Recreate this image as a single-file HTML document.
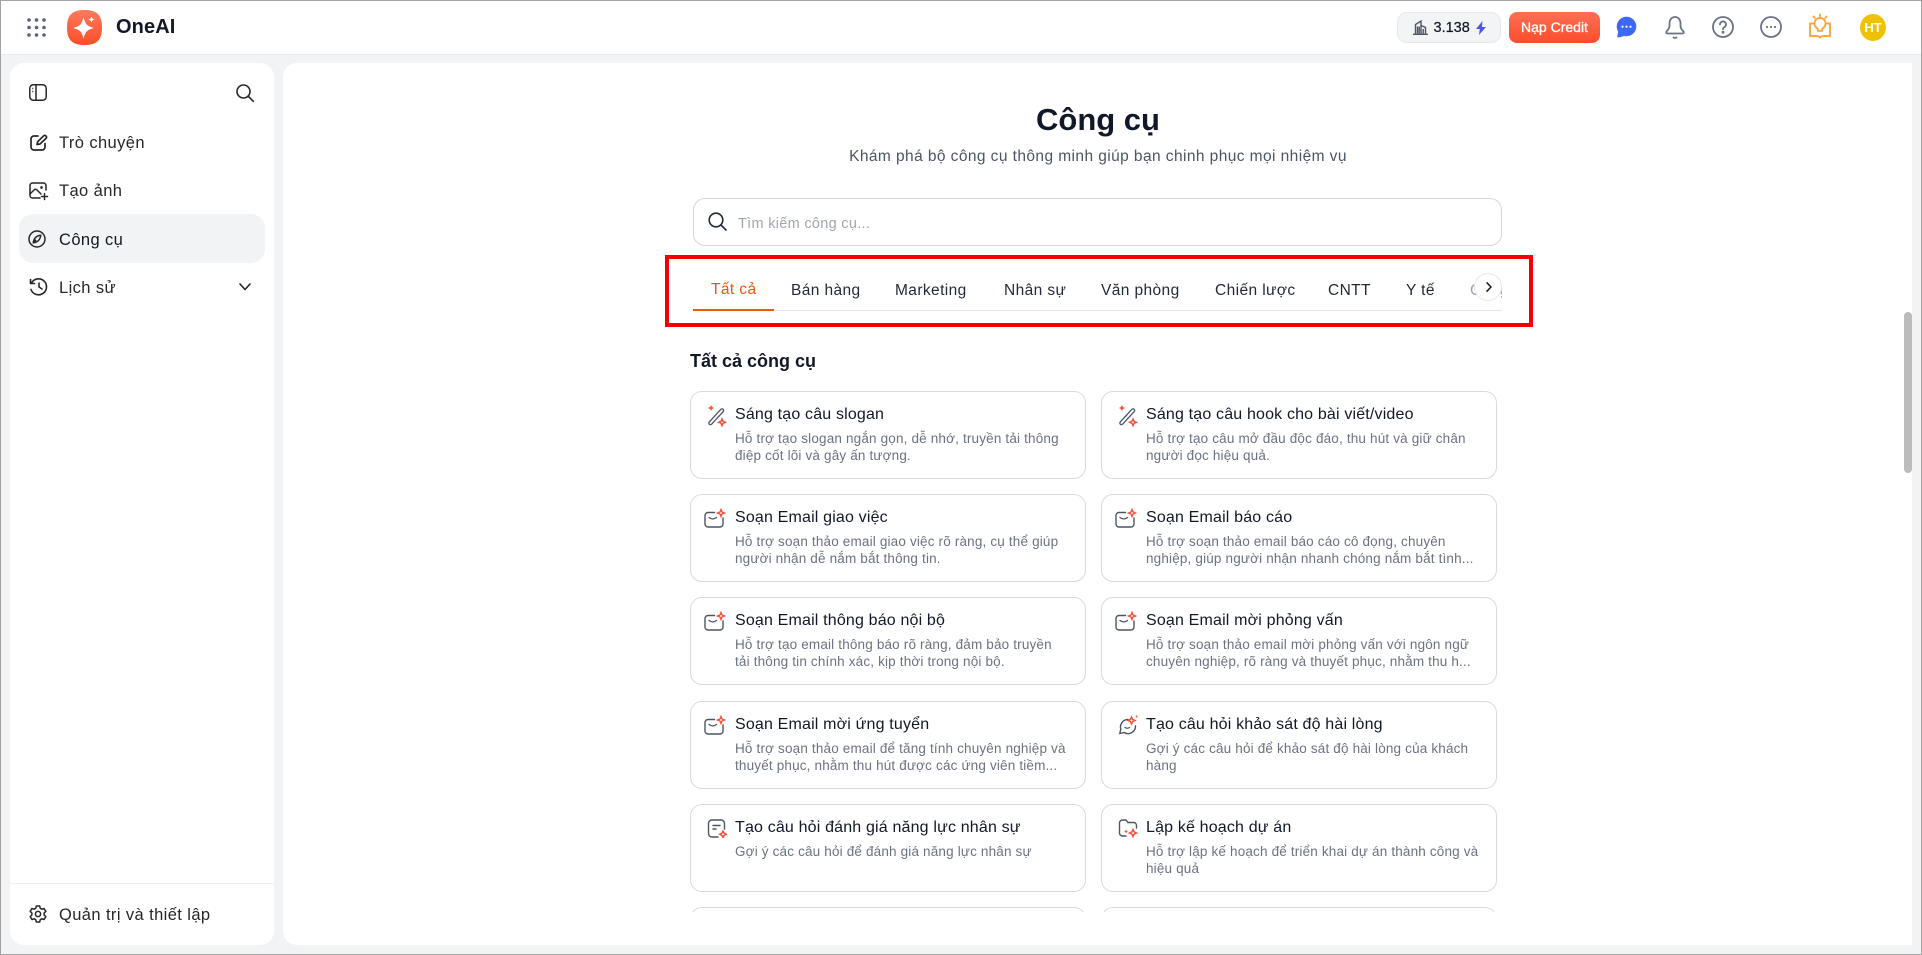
<!DOCTYPE html>
<html lang="vi"><head><meta charset="utf-8"><title>OneAI - Công cụ</title>
<style>
*{box-sizing:border-box;margin:0;padding:0}
html,body{width:1922px;height:955px;overflow:hidden;background:#f2f3f5;font-family:"Liberation Sans",sans-serif;color:#111827}
.a{position:absolute;white-space:nowrap}
svg{position:absolute;overflow:visible}
#frame{position:absolute;inset:0;border:1px solid #a3a3a3;z-index:20;pointer-events:none}
#top{position:absolute;left:0;top:0;width:1922px;height:55px;background:#fff;border-bottom:1px solid #e9eaed}
#side{position:absolute;left:10px;top:63px;width:264px;height:882px;background:#fff;border-radius:14px}
#main{position:absolute;left:283px;top:63px;width:1629px;height:882px;background:#fff;border-radius:14px 0 0 14px}
.nav{font-size:16.5px;line-height:20px;left:59px;color:#27272a;letter-spacing:.4px}
.tab{top:281px;font-size:15.5px;line-height:20px;color:#1f2937;letter-spacing:.4px}
.card{position:absolute;width:396px;height:88px;border:1px solid #d8dade;border-radius:12px;background:#fff}
.card b{position:absolute;left:44px;top:13px;font-weight:400;font-size:16px;line-height:20px;color:#111827;letter-spacing:.17px;white-space:nowrap}
.card p{position:absolute;left:44px;top:38px;font-size:13.5px;line-height:17px;color:#6b7280;letter-spacing:.17px;white-space:nowrap}
.card svg{left:16px;top:13px}
.card svg.m{left:13px;width:22px;height:20px}
</style></head><body>
<svg width="0" height="0" style="position:absolute"><defs>
<symbol id="wand" viewBox="0 0 20 22">
<path d="M3.500 18L15 5.500" fill="none" stroke="#4b5563" stroke-width="4.600" stroke-linecap="round"/>
<path d="M3.500 18L15 5.500" fill="none" stroke="#fff" stroke-width="2" stroke-linecap="round"/>
<path d="M4 0l1 2 2 1-2 1-1 2-1-2-2-1 2-1z" fill="#f2523a"/>
<path d="M15 14l1 2.300 2.300 1-2.300 1-1 2.300-1-2.300-2.300-1 2.300-1z" fill="none" stroke="#f2523a" stroke-width="1.500"/></symbol>
<symbol id="mail" viewBox="0 0 22 20">
<path d="M10.500 4.500H4A3 3 0 0 0 1 7.500V16a3 3 0 0 0 3 3h12a3 3 0 0 0 3-3V10" fill="none" stroke="#4b5563" stroke-width="1.400" stroke-linecap="round"/>
<path d="M5 9.500c2.500 2 5 2 7.500 0" fill="none" stroke="#4b5563" stroke-width="1.300" stroke-linecap="round"/>
<path d="M17 1.500l1 2.500 2.500 1-2.500 1-1 2.500-1-2.500L13.500 5l2.500-1z" fill="none" stroke="#f2523a" stroke-width="1.400"/></symbol>
<symbol id="chat" viewBox="0 0 20 20">
<path d="M10 4.500a7.500 7.500 0 0 0-7.200 9.700L1.800 18.500l4.300-1A7.500 7.500 0 0 0 17.500 11" fill="none" stroke="#4b5563" stroke-width="1.400" stroke-linecap="round"/>
<path d="M7 12.500c1.500 1 3 1 4.500 0" fill="none" stroke="#4b5563" stroke-width="1.300" stroke-linecap="round"/>
<path d="M13.500 2l1.100 2.400 2.400 1.100-2.400 1.100-1.100 2.400-1.100-2.400L10 5.500l2.400-1.100z" fill="none" stroke="#f2523a" stroke-width="1.500"/><circle cx="18.500" cy="1.500" r="1" fill="#f2523a"/></symbol>
<symbol id="sheet" viewBox="0 0 20 20">
<path d="M11 19H5a3.500 3.500 0 0 1-3.500-3.500v-10A3.500 3.500 0 0 1 5 2h9a3.500 3.500 0 0 1 3.500 3.500V11M6 7.500h7M6 11h3" fill="none" stroke="#4b5563" stroke-width="1.400" stroke-linecap="round"/>
<path d="M16 13l1.100 2.200 2.200 1.100-2.200 1.100L16 19.600l-1.100-2.200-2.200-1.100 2.200-1.100z" fill="none" stroke="#f2523a" stroke-width="1.500"/></symbol>
<symbol id="folder" viewBox="0 0 20 20">
<path d="M8 18H4.500a3 3 0 0 1-3-3V5a3 3 0 0 1 3-3H8l2 2.500h5.500a3 3 0 0 1 3 3V10" fill="none" stroke="#4b5563" stroke-width="1.400" stroke-linecap="round"/>
<path d="M15 11.500l1.100 2.400 2.400 1.100-2.400 1.100L15 18.500l-1.100-2.400-2.400-1.100 2.400-1.100z" fill="none" stroke="#f2523a" stroke-width="1.500"/><path d="M8 11.500l.6 1.400 1.400.6-1.400.6L8 15.500l-.6-1.400-1.400-.6 1.400-.6z" fill="#f2523a"/></symbol>
</defs></svg>

<div id="top"></div>
<svg style="left:27px;top:18px" width="19" height="19" fill="#5b6472"><circle cx="2" cy="2" r="1.800"/><circle cx="9.500" cy="2" r="1.800"/><circle cx="17" cy="2" r="1.800"/><circle cx="2" cy="9.500" r="1.800"/><circle cx="9.500" cy="9.500" r="1.800"/><circle cx="17" cy="9.500" r="1.800"/><circle cx="2" cy="17" r="1.800"/><circle cx="9.500" cy="17" r="1.800"/><circle cx="17" cy="17" r="1.800"/></svg>
<svg style="left:67px;top:10px" width="35" height="35" viewBox="0 0 35 35"><defs><linearGradient id="lg" x1="0" y1="0" x2="0" y2="1"><stop offset="0" stop-color="#ff7a5e"/><stop offset="1" stop-color="#fb4e2a"/></linearGradient></defs>
<path d="M17.500 0C30 0 35 5 35 17.500S30 35 17.500 35 0 30 0 17.500 5 0 17.500 0z" fill="url(#lg)"/>
<path d="M16.500 8c1.300 6 3 8.200 9.500 10-6.500 1.800-8.200 4-9.500 10-1.300-6-3-8.200-9.500-10 6.500-1.800 8.200-4 9.500-10z" fill="#fff" stroke="#fff" stroke-width=".6" stroke-linejoin="round"/><path d="M24.500 6c.4 2.300 1 3 3.200 3.500-2.200.5-2.800 1.200-3.200 3.500-.4-2.300-1-3-3.200-3.500 2.200-.5 2.800-1.200 3.200-3.500z" fill="#fff"/></svg>
<div class="a" style="left:116px;top:15px;font-size:20px;line-height:24px;font-weight:700;color:#111827;letter-spacing:.1px">OneAI</div>

<div class="a" style="left:1397px;top:12px;width:104px;height:31px;background:#f3f4f6;border:1px solid #e5e7eb;border-radius:10px"></div>
<svg style="left:1413px;top:20px" width="15" height="15" viewBox="0 0 15 15" fill="none" stroke="#4b5563" stroke-width="1.400"><path d="M0 14.300h15M2.500 14.500V4.500L8 1v13.500M8 5.500l4.500 2v7M4.500 6.500v7M6.200 6.500v7M10.200 9v5"/></svg>
<div class="a" style="left:1433.500px;top:18px;font-size:14.500px;line-height:20px;color:#111827;-webkit-text-stroke:.2px #111827">3.138</div>
<svg style="left:1476px;top:21px" width="10" height="14" viewBox="0 0 10 14"><path d="M6.500 0L0 8h3.800L3 14l7-8H6z" fill="#4f55e8"/></svg>
<div class="a" style="left:1509px;top:12px;width:91px;height:31px;border-radius:8px;background:linear-gradient(#ff6f55,#fb4d2b);color:#fff;font-size:14px;line-height:31px;text-align:center;-webkit-text-stroke:.35px #fff">Nạp Credit</div>
<svg style="left:1616px;top:17px" width="21" height="21" viewBox="0 0 21 21"><circle cx="10.500" cy="9.500" r="9.800" fill="#3d68f6"/><path d="M2 15l-.8 5.300c2.500.3 5-.4 7-1.500z" fill="#3d68f6"/><g fill="#fff"><circle cx="6.500" cy="9.700" r="1.100"/><circle cx="10.500" cy="9.700" r="1.100"/><circle cx="14.500" cy="9.700" r="1.100"/></g></svg>
<svg style="left:1665px;top:16px" width="20" height="23" viewBox="0 0 20 23" fill="none" stroke="#6b7280" stroke-width="1.800" stroke-linecap="round" stroke-linejoin="round"><path d="M10 1C6.400 1 4.500 4 4.500 7.500V10c0 2.500-1.500 4-3 5.500-.8 1 0 2 1 2h15c1 0 1.800-1 1-2-1.500-1.500-3-3-3-5.500V7.500C15.500 4 13.600 1 10 1zM8.500 21.500c.9.500 2.100.5 3 0"/></svg>
<svg style="left:1712px;top:16px" width="22" height="22" viewBox="0 0 22 22" fill="none" stroke="#6b7280" stroke-width="1.800" stroke-linecap="round"><circle cx="11" cy="11" r="10"/><path d="M8 8.500a3 3 0 1 1 4.500 2.600c-1 .6-1.500 1.200-1.500 2.200"/><circle cx="11" cy="16.200" r=".5" fill="#6b7280"/></svg>
<svg style="left:1760px;top:16px" width="22" height="22" viewBox="0 0 22 22" fill="none" stroke="#6b7280" stroke-width="1.800"><circle cx="11" cy="11" r="10"/><g fill="#6b7280" stroke="none"><circle cx="7" cy="11" r="1.100"/><circle cx="11" cy="11" r="1.100"/><circle cx="15" cy="11" r="1.100"/></g></svg>
<svg style="left:1809px;top:14px" width="22" height="24" viewBox="0 0 22 24" fill="none" stroke="#ffa53b" stroke-width="1.900" stroke-linecap="round" stroke-linejoin="round"><path d="M11 .5v1.700M4.500 2.500l1.300 1.300M17.500 2.500l-1.300 1.300"/><path d="M8.800 14.500a5.500 5.500 0 1 1 4.400 0v2.300H8.800z"/><path d="M4 9.500H1V22h6c2 0 3.300.6 4 1.500.7-.9 2-1.500 4-1.500h6V9.500h-3"/></svg>
<div class="a" style="left:1860px;top:14px;width:26px;height:27px;border-radius:50%;background:#eec200;color:#fff;font-size:13px;font-weight:700;line-height:27px;text-align:center">HT</div>

<div id="side"></div>
<svg style="left:29px;top:84px" width="18" height="17" viewBox="0 0 18 17" fill="none" stroke="#27272a" stroke-width="1.500"><rect x=".8" y=".8" width="16.400" height="15.400" rx="3.500"/><path d="M7 1v15M3.300 4.500h1M3.300 7.500h1"/></svg>
<svg style="left:236px;top:84px" width="18" height="18" viewBox="0 0 18 18" fill="none" stroke="#27272a" stroke-width="1.600" stroke-linecap="round"><circle cx="7.500" cy="7.500" r="6.500"/><path d="M12.500 12.500L17.300 17.300"/></svg>
<svg style="left:30px;top:134px" width="18" height="17" viewBox="0 0 18 17" fill="none" stroke="#27272a" stroke-width="1.700" stroke-linecap="round" stroke-linejoin="round"><path d="M8 2H4a3 3 0 0 0-3 3v8a3 3 0 0 0 3 3h8a3 3 0 0 0 3-3V9.500"/><path d="M7 10.500l.6-2.600L13.600 1.800a1.500 1.500 0 0 1 2.200 0l.3.300a1.500 1.500 0 0 1 0 2.200L10 10z"/></svg>
<div class="a nav" style="top:132.500px">Trò chuyện</div>
<svg style="left:29px;top:182px" width="19" height="18" viewBox="0 0 19 18" fill="none" stroke="#27272a" stroke-width="1.500" stroke-linecap="round" stroke-linejoin="round"><path d="M17 8V3.500A2.500 2.500 0 0 0 14.500 1h-11A2.500 2.500 0 0 0 1 3.500v10A2.500 2.500 0 0 0 3.500 16H11"/><path d="M1 12l4-4c1-1 2-1 3 0l4 4M15.500 11.500v6M12.500 14.500h6"/><circle cx="12.500" cy="5.500" r=".6"/></svg>
<div class="a nav" style="top:180.500px">Tạo ảnh</div>
<div class="a" style="left:19px;top:214px;width:246px;height:49px;background:#f2f3f5;border-radius:14px"></div>
<svg style="left:28px;top:230px" width="18" height="18" viewBox="0 0 18 18" fill="none" stroke="#27272a" stroke-width="1.500" stroke-linejoin="round"><circle cx="9" cy="9" r="8"/><path d="M12.800 5.200c-3.500.3-6.800 2-7.600 7.600 3.500-.3 6.800-2 7.600-7.600zM5.200 12.800l3-3"/></svg>
<div class="a nav" style="top:229.500px;color:#111827">Công cụ</div>
<svg style="left:29px;top:278px" width="19" height="18" viewBox="0 0 19 18" fill="none" stroke="#27272a" stroke-width="1.600" stroke-linecap="round" stroke-linejoin="round"><path d="M2.500 5A8 8 0 1 1 2 11.500M1.500 1.500V5.500H5.500M10 5v4l3 2"/></svg>
<div class="a nav" style="top:278px">Lịch sử</div>
<svg style="left:239px;top:283px" width="12" height="8" viewBox="0 0 12 8" fill="none" stroke="#27272a" stroke-width="1.600" stroke-linecap="round" stroke-linejoin="round"><path d="M1 1l5 5.500L11 1"/></svg>
<div class="a" style="left:10px;top:883px;width:264px;height:1px;background:#eceef0"></div>
<svg style="left:29px;top:905px" width="18" height="18" viewBox="0 0 18 18" fill="none" stroke="#27272a" stroke-width="1.500" stroke-linejoin="round"><path d="M7.300 1h3.400l.5 2.200 1.700 1 2.200-.7L16.800 6.400 15.100 8v2l1.700 1.600-1.700 2.900-2.200-.7-1.700 1-.5 2.200H7.300l-.5-2.200-1.700-1-2.200.7L1.200 11.600 2.900 10V8L1.200 6.400l1.700-2.900 2.200.7 1.700-1z"/><circle cx="9" cy="9" r="2.600"/></svg>
<div class="a nav" style="top:904.500px">Quản trị và thiết lập</div>

<div id="main"></div>
<div class="a" style="left:867px;top:100px;width:462px;text-align:center;font-size:31px;line-height:40px;font-weight:700;color:#111827">Công cụ</div>
<div class="a" style="left:767px;top:147px;width:662px;text-align:center;font-size:15.500px;line-height:20px;color:#4b5563;letter-spacing:.42px">Khám phá bộ công cụ thông minh giúp bạn chinh phục mọi nhiệm vụ</div>
<div class="a" style="left:693px;top:198px;width:809px;height:48px;border:1px solid #d4d6db;border-radius:12px;background:#fff"></div>
<svg style="left:708px;top:212px" width="19" height="19" viewBox="0 0 19 19" fill="none" stroke="#1f2937" stroke-width="1.600" stroke-linecap="round"><circle cx="8" cy="8" r="6.800"/><path d="M13 13l5 5"/></svg>
<div class="a" style="left:738px;top:214px;font-size:14.500px;line-height:20px;color:#a1a5ad;letter-spacing:.3px">Tìm kiếm công cụ...</div>

<div class="a" style="left:693px;top:310px;width:809px;height:1px;background:#e5e7eb"></div>
<div class="a" style="left:693px;top:309px;width:81px;height:2px;background:#ea580c"></div>
<div class="a tab" style="left:711px;color:#ea580c;top:280px">Tất cả</div>
<div class="a tab" style="left:791px">Bán hàng</div>
<div class="a tab" style="left:895px">Marketing</div>
<div class="a tab" style="left:1004px">Nhân sự</div>
<div class="a tab" style="left:1101px">Văn phòng</div>
<div class="a tab" style="left:1215px">Chiến lược</div>
<div class="a tab" style="left:1328px">CNTT</div>
<div class="a tab" style="left:1406px">Y tế</div>
<div class="a" style="left:1470px;top:270px;width:32px;height:36px;overflow:hidden"><span class="a tab" style="left:0;top:11px;color:#9ca3af">Công</span></div>
<div class="a" style="left:1474px;top:273px;width:28px;height:28px;border-radius:50%;background:#fff;border:1px solid #e8e9ec"></div>
<svg style="left:1486px;top:282px" width="6" height="10" viewBox="0 0 6 10" fill="none" stroke="#111827" stroke-width="1.500" stroke-linecap="round" stroke-linejoin="round"><path d="M1 .8L5 5 1 9.200"/></svg>
<div class="a" style="left:664.500px;top:255px;width:868px;height:72px;border:4px solid #f50000"></div>

<div class="a" style="left:690px;top:351px;font-size:18px;line-height:20px;font-weight:700;color:#111827">Tất cả công cụ</div>

<div class="a" style="left:680px;top:380px;width:830px;height:532px;overflow:hidden">
<div class="card" style="left:10px;top:11px"><svg width="20" height="22"><use href="#wand"/></svg><b>Sáng tạo câu slogan</b><p>Hỗ trợ tạo slogan ngắn gọn, dễ nhớ, truyền tải thông<br>điệp cốt lõi và gây ấn tượng.</p></div>
<div class="card" style="left:421px;top:11px"><svg width="20" height="22"><use href="#wand"/></svg><b>Sáng tạo câu hook cho bài viết/video</b><p>Hỗ trợ tạo câu mở đầu độc đáo, thu hút và giữ chân<br>người đọc hiệu quả.</p></div>
<div class="card" style="left:10px;top:114px"><svg class="m"><use href="#mail"/></svg><b>Soạn Email giao việc</b><p>Hỗ trợ soạn thảo email giao việc rõ ràng, cụ thể giúp<br>người nhận dễ nắm bắt thông tin.</p></div>
<div class="card" style="left:421px;top:114px"><svg class="m"><use href="#mail"/></svg><b>Soạn Email báo cáo</b><p>Hỗ trợ soạn thảo email báo cáo cô đọng, chuyên<br>nghiệp, giúp người nhận nhanh chóng nắm bắt tình...</p></div>
<div class="card" style="left:10px;top:217px"><svg class="m"><use href="#mail"/></svg><b>Soạn Email thông báo nội bộ</b><p>Hỗ trợ tạo email thông báo rõ ràng, đảm bảo truyền<br>tải thông tin chính xác, kịp thời trong nội bộ.</p></div>
<div class="card" style="left:421px;top:217px"><svg class="m"><use href="#mail"/></svg><b>Soạn Email mời phỏng vấn</b><p>Hỗ trợ soạn thảo email mời phỏng vấn với ngôn ngữ<br>chuyên nghiệp, rõ ràng và thuyết phục, nhằm thu h...</p></div>
<div class="card" style="left:10px;top:321px"><svg class="m"><use href="#mail"/></svg><b>Soạn Email mời ứng tuyển</b><p>Hỗ trợ soạn thảo email để tăng tính chuyên nghiệp và<br>thuyết phục, nhằm thu hút được các ứng viên tiềm...</p></div>
<div class="card" style="left:421px;top:321px"><svg width="20" height="20"><use href="#chat"/></svg><b>Tạo câu hỏi khảo sát độ hài lòng</b><p>Gợi ý các câu hỏi để khảo sát độ hài lòng của khách<br>hàng</p></div>
<div class="card" style="left:10px;top:424px"><svg width="20" height="20"><use href="#sheet"/></svg><b>Tạo câu hỏi đánh giá năng lực nhân sự</b><p>Gợi ý các câu hỏi để đánh giá năng lực nhân sự</p></div>
<div class="card" style="left:421px;top:424px"><svg width="20" height="20"><use href="#folder"/></svg><b>Lập kế hoạch dự án</b><p>Hỗ trợ lập kế hoạch để triển khai dự án thành công và<br>hiệu quả</p></div>
<div class="card" style="left:10px;top:527px"></div>
<div class="card" style="left:421px;top:527px"></div>
</div>

<div class="a" style="left:1904px;top:312px;width:8px;height:161px;border-radius:4px;background:#bcbcbc"></div>
<div id="frame"></div>
</body></html>
